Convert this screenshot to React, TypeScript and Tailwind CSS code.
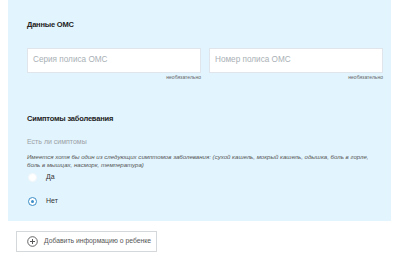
import React from "react";

export default function App() {
  return (
    <div className="w-[400px] h-[256px] bg-white overflow-hidden" style={{ fontFamily: '"Liberation Sans", Arial, sans-serif' }}>
      <div className="ml-[8px] w-[383px] h-[221px] bg-[#e2f4fd] pl-[19px] pr-[8px] pt-[21px]">
        <div className="text-[7.5px] leading-[8px] font-bold text-[#222] tracking-[-0.2px]">Данные ОМС</div>
        <div className="grid grid-cols-2 gap-[8px] mt-[19px]">
          {["Серия полиса ОМС", "Номер полиса ОМС"].map((p) => (
            <div key={p} className="flex flex-col">
              <div className="h-[25px] bg-white border border-[#dfe5ea] flex items-center pl-[5px] text-[8.2px] text-[#a9b0b6]">{p}</div>
              <div className="text-right text-[5px] leading-[6px] mt-[1px] text-[#666]">необязательно</div>
            </div>
          ))}
        </div>
        <div className="mt-[35px] text-[7.5px] leading-[8px] font-bold text-[#222] tracking-[-0.2px]">Симптомы заболевания</div>
        <div className="mt-[15px] text-[7px] leading-[8px] text-[#9ba1a6]">Есть ли симптомы</div>
        <div className="mt-[7px] text-[6.1px] leading-[8px] italic text-[#555] whitespace-nowrap">
          Имеется хотя бы один из следующих симптомов заболевания: (сухой кашель, мокрый кашель, одышка, боль в горле,
          <br />
          боль в мышцах, насморк, температура)
        </div>
        <div className="mt-[3px] flex items-center h-[10px]">
          <div className="w-[9px] h-[9px] rounded-full bg-white border border-[#f3f7f9] ml-[1px]" />
          <span className="ml-[9px] text-[7px] text-[#333]">Да</span>
        </div>
        <div className="mt-[14px] flex items-center h-[10px]">
          <div className="w-[9px] h-[9px] rounded-full bg-white border border-[#3a8dc8] ml-[1px] flex items-center justify-center">
            <div className="w-[3px] h-[3px] rounded-full bg-[#3a8dc8]" />
          </div>
          <span className="ml-[9px] text-[7px] text-[#333]">Нет</span>
        </div>
      </div>
      <div className="ml-[16px] mt-[10px] w-[141px] h-[21px] border border-[#d4d8db] bg-white flex items-center">
        <svg width="11" height="11" viewBox="0 0 11 11" className="ml-[10px]">
          <circle cx="5.5" cy="5.5" r="4.8" fill="none" stroke="#555" strokeWidth="0.9" />
          <path d="M5.5 3v5M3 5.5h5" stroke="#555" strokeWidth="1" />
        </svg>
        <span className="ml-[6px] text-[6.8px] text-[#555]">Добавить информацию о ребенке</span>
      </div>
    </div>
  );
}
